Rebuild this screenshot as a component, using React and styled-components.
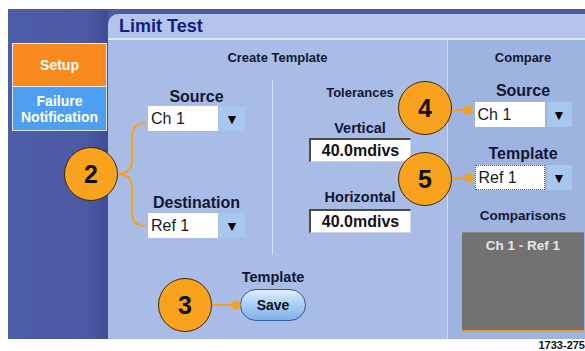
import styled, { createGlobalStyle } from 'styled-components'

const GlobalStyle = createGlobalStyle`
  html, body {
    margin: 0;
    padding: 0;
    background: #fff;
  }
  body {
    font-family: 'Liberation Sans', Arial, sans-serif;
  }
`

const Page = styled.div`
  position: relative;
  width: 585px;
  height: 351px;
  overflow: hidden;
  box-sizing: border-box;
  padding: 9px 0 0 8px;
  background: #fff;
`

const Frame = styled.div`
  display: flex;
  width: 577px;
  height: 330px;
  background: #4b5aa3;
`

const Sidebar = styled.div`
  width: 100px;
  box-sizing: border-box;
  padding: 34px 0 0 4px;
  background: linear-gradient(90deg, #4e5da7 0%, #4b5aa3 78%, #3f4d93 100%);
`

const Tabs = styled.div`
  display: flex;
  flex-direction: column;
  width: 95px;
  box-sizing: border-box;
  border: 1px solid #e2e8f6;
`

const Tab = styled.div`
  height: ${(p) => p.$h}px;
  display: flex;
  align-items: center;
  justify-content: center;
  text-align: center;
  background: ${(p) => p.$bg};
  border-top: ${(p) => (p.$first ? 'none' : '1px solid #e2e8f6')};
  color: #fff;
  font-weight: bold;
  font-size: 14px;
  line-height: 16px;
`

const Panel = styled.div`
  flex: 1;
  display: flex;
  flex-direction: column;
  padding-top: 5px;
`

const TitleBar = styled.div`
  height: 24px;
  padding-left: 11px;
  background: #b5c4ea;
  border-top-left-radius: 10px;
  border-bottom: 2px solid #dfe7f7;
  color: #161d7e;
  font-weight: bold;
  font-size: 18px;
  line-height: 25px;
`

const Content = styled.div`
  flex: 1;
  display: grid;
  grid-template-columns: 339px 1fr;
`

const CreateSection = styled.div`
  display: flex;
  flex-direction: column;
  align-items: center;
  padding-top: 10px;
  background: #a9bce6;
`

const CompareSection = styled.div`
  display: flex;
  flex-direction: column;
  align-items: center;
  padding: 10px 1px 0 14px;
  background: #9fb3e0;
  border-left: 1px solid #cfdbf3;
`

const Label = styled.div`
  margin-top: ${(p) => p.$mt || 0}px;
  color: #121731;
  font-weight: bold;
  font-size: ${(p) => p.$size}px;
  line-height: ${(p) => p.$lh}px;
  white-space: nowrap;
`

const Columns = styled.div`
  display: flex;
  align-self: stretch;
  height: 175px;
  margin-top: 14px;
`

const SourceColumn = styled.div`
  width: 164px;
  box-sizing: border-box;
  padding: 8px 0 0 13px;
  display: flex;
  flex-direction: column;
  align-items: center;
`

const ToleranceColumn = styled.div`
  flex: 1;
  padding-top: 5px;
  display: flex;
  flex-direction: column;
  align-items: center;
  border-left: 1px solid #d5dff5;
`

const Dropdown = styled.div`
  display: flex;
  gap: ${(p) => p.$gap}px;
  height: 25px;
  margin-top: ${(p) => p.$mt || 0}px;
`

const Field = styled.div`
  width: 70px;
  box-sizing: border-box;
  padding-left: 3px;
  background: #fff;
  border: ${(p) => (p.$focused ? '1px dotted #5a5a5a' : 'none')};
  color: #1a1a1a;
  font-size: 16px;
  line-height: ${(p) => (p.$focused ? 23 : 25)}px;
`

const ArrowButton = styled.div`
  width: ${(p) => p.$w}px;
  display: flex;
  align-items: center;
  justify-content: center;
  background: #a8c7ef;
  color: #000;
  font-size: 14px;
`

const ValueBox = styled.div`
  width: 102px;
  height: 24px;
  box-sizing: border-box;
  margin-top: ${(p) => p.$mt}px;
  background: #fff;
  border-top: 2px solid #4a4a4a;
  border-left: 2px solid #4a4a4a;
  border-right: 1px solid #c9d4ec;
  border-bottom: 1px solid #c9d4ec;
  color: #111;
  font-weight: bold;
  font-size: 16px;
  line-height: 21px;
  text-align: center;
`

const SaveGroup = styled.div`
  display: flex;
  flex-direction: column;
  align-items: center;
  margin: 14px 9px 0 0;
`

const SaveButton = styled.button`
  width: 66px;
  height: 32px;
  margin-top: 3px;
  padding: 0;
  border: 1px solid #2c5ca4;
  border-radius: 16px;
  background: linear-gradient(180deg, #e0eefc 0%, #a9cdf4 50%, #7fb1ea 100%);
  color: #111;
  font-family: 'Liberation Sans', Arial, sans-serif;
  font-weight: bold;
  font-size: 14px;
`

const CompareBox = styled.div`
  width: 122px;
  height: 100px;
  box-sizing: border-box;
  margin-top: 8px;
  padding-top: 5px;
  background: #727272;
  border-top: 1px solid #8a8a8a;
  border-bottom: 2px solid #e59b2d;
  color: #e6e6e6;
  font-weight: bold;
  font-size: 13.5px;
  text-align: center;
`

const Footer = styled.div`
  display: flex;
  justify-content: flex-end;
  margin-right: 0;
  color: #111;
  font-weight: bold;
  font-size: 11px;
  line-height: 12px;
`

const Callout = styled.div`
  position: absolute;
  left: ${(p) => p.$x}px;
  top: ${(p) => p.$y}px;
  width: 54px;
  height: 54px;
  box-sizing: border-box;
  display: flex;
  align-items: center;
  justify-content: center;
  border-radius: 50%;
  border: 1.5px solid #3d2a08;
  background: #f8a21d;
  color: #111;
  font-weight: bold;
  font-size: 25px;
`

const Leaders = styled.svg`
  position: absolute;
  left: 0;
  top: 0;
  pointer-events: none;
`

const Select = ({ value, gap = 1, arrow = 26, mt, focused }) => (
  <Dropdown $gap={gap} $mt={mt}>
    <Field $focused={focused}>{value}</Field>
    <ArrowButton $w={arrow}>▼</ArrowButton>
  </Dropdown>
)

const App = () => {
  return (
    <Page>
      <GlobalStyle />
      <Frame>
        <Sidebar>
          <Tabs>
            <Tab $h={42} $bg="#f7891d" $first>
              Setup
            </Tab>
            <Tab $h={43} $bg="#4d9ff1">
              Failure
              <br />
              Notification
            </Tab>
          </Tabs>
        </Sidebar>
        <Panel>
          <TitleBar>Limit Test</TitleBar>
          <Content>
            <CreateSection>
              <Label $size={13} $lh={16}>
                Create Template
              </Label>
              <Columns>
                <SourceColumn>
                  <Label $size={16} $lh={18}>
                    Source
                  </Label>
                  <Select value="Ch 1" />
                  <Label $size={16} $lh={18} $mt={63}>
                    Destination
                  </Label>
                  <Select value="Ref 1" mt={1} />
                </SourceColumn>
                <ToleranceColumn>
                  <Label $size={13} $lh={16}>
                    Tolerances
                  </Label>
                  <Label $size={14.5} $lh={17} $mt={19}>
                    Vertical
                  </Label>
                  <ValueBox $mt={1}>40.0mdivs</ValueBox>
                  <Label $size={14.5} $lh={17} $mt={27}>
                    Horizontal
                  </Label>
                  <ValueBox $mt={3}>40.0mdivs</ValueBox>
                </ToleranceColumn>
              </Columns>
              <SaveGroup>
                <Label $size={14.5} $lh={17}>
                  Template
                </Label>
                <SaveButton>Save</SaveButton>
              </SaveGroup>
            </CreateSection>
            <CompareSection>
              <Label $size={13} $lh={16}>
                Compare
              </Label>
              <Label $size={16} $lh={18} $mt={16}>
                Source
              </Label>
              <Select value="Ch 1" gap={2} arrow={25} mt={2} />
              <Label $size={16} $lh={18} $mt={18}>
                Template
              </Label>
              <Select value="Ref 1" gap={2} arrow={25} mt={2} focused />
              <Label $size={13.5} $lh={16} $mt={18}>
                Comparisons
              </Label>
              <CompareBox>Ch 1 - Ref 1</CompareBox>
            </CompareSection>
          </Content>
        </Panel>
      </Frame>
      <Footer>1733-275</Footer>

      <Leaders width="585" height="351">
        <g fill="none" stroke="#f4a11d" strokeWidth="2">
          <path d="M146,123 Q132,123 132,137 L132,160 Q132,174 118,174 Q132,174 132,188 L132,212 Q132,226 146,226" />
          <line x1="211" y1="305" x2="236" y2="305" />
          <line x1="451" y1="110" x2="468" y2="110" />
          <line x1="451" y1="179" x2="469" y2="178" />
        </g>
        <g fill="#f4a11d">
          <circle cx="236" cy="305" r="4.5" />
          <circle cx="468" cy="110" r="4.5" />
          <circle cx="469" cy="178" r="4.5" />
        </g>
      </Leaders>
      <Callout $x={64} $y={147}>2</Callout>
      <Callout $x={158} $y={278}>3</Callout>
      <Callout $x={398} $y={81}>4</Callout>
      <Callout $x={398} $y={152}>5</Callout>
    </Page>
  )
}

export default App
